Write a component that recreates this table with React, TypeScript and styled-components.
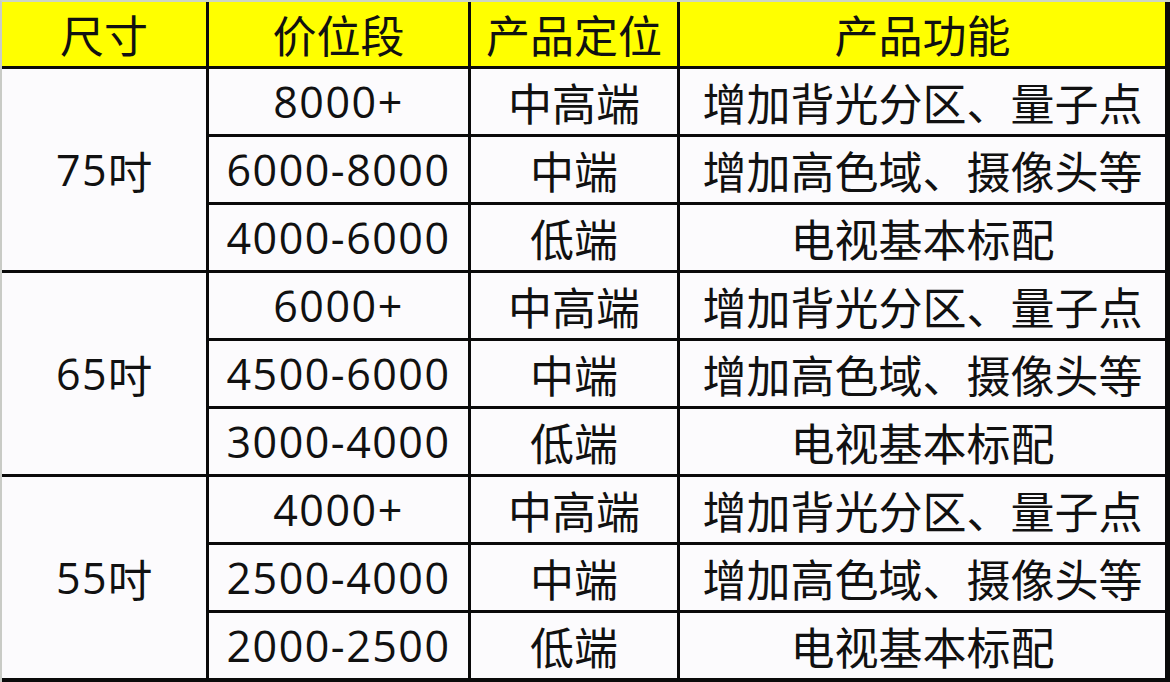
import styled, { createGlobalStyle } from "styled-components";

const GlobalStyle = createGlobalStyle`
  html, body {
    margin: 0;
    padding: 0;
    background: #ffffff;
  }
  body {
    font-family: "Noto Sans CJK SC", "Noto Sans", sans-serif;
  }
`;

const Sheet = styled.div`
  width: 1170px;
  height: 682px;
  box-sizing: border-box;
  display: grid;
  grid-template-columns: 204px 259px 206px 485px;
  grid-template-rows: 64px repeat(9, 65px);
  gap: 3px;
  background: #0a0a0a;
  border-left: 2px solid #c9cbc6;
  border-top: 2px solid #cdd6c4;
  padding-right: 5px;
  padding-bottom: 4px;
`;

const Cell = styled.div<{ $head?: boolean; $span?: number; $col?: number }>`
  display: flex;
  align-items: center;
  justify-content: center;
  background: ${(p) => (p.$head ? "#ffff00" : "#fcfbfd")};
  color: #111111;
  font-size: 44px;
  line-height: 1;
  white-space: nowrap;
  grid-row: ${(p) => (p.$span ? `span ${p.$span}` : "auto")};
  grid-column: ${(p) => (p.$col ? p.$col : "auto")};
`;

const Num = styled.span`
  font-family: "Open Sans", "Noto Sans", sans-serif;
  font-size: 43px;
  letter-spacing: 1.5px;
`;

type Tier = { price: string; level: string; feature: string };

const groups: { size: string; tiers: Tier[] }[] = [
  {
    size: "75",
    tiers: [
      { price: "8000+", level: "中高端", feature: "增加背光分区、量子点" },
      { price: "6000-8000", level: "中端", feature: "增加高色域、摄像头等" },
      { price: "4000-6000", level: "低端", feature: "电视基本标配" },
    ],
  },
  {
    size: "65",
    tiers: [
      { price: "6000+", level: "中高端", feature: "增加背光分区、量子点" },
      { price: "4500-6000", level: "中端", feature: "增加高色域、摄像头等" },
      { price: "3000-4000", level: "低端", feature: "电视基本标配" },
    ],
  },
  {
    size: "55",
    tiers: [
      { price: "4000+", level: "中高端", feature: "增加背光分区、量子点" },
      { price: "2500-4000", level: "中端", feature: "增加高色域、摄像头等" },
      { price: "2000-2500", level: "低端", feature: "电视基本标配" },
    ],
  },
];

const headers = ["尺寸", "价位段", "产品定位", "产品功能"];

export default function App() {
  return (
    <>
      <GlobalStyle />
      <Sheet>
        {headers.map((h) => (
          <Cell key={h} $head>
            {h}
          </Cell>
        ))}
        {groups.map((g) =>
          g.tiers.map((t, i) => [
            i === 0 ? (
              <Cell key={g.size} $span={3} $col={1}>
                <Num>{g.size}</Num>吋
              </Cell>
            ) : null,
            <Cell key={`${g.size}-p${i}`} $col={2}>
              <Num>{t.price}</Num>
            </Cell>,
            <Cell key={`${g.size}-l${i}`}>{t.level}</Cell>,
            <Cell key={`${g.size}-f${i}`}>{t.feature}</Cell>,
          ])
        )}
      </Sheet>
    </>
  );
}
